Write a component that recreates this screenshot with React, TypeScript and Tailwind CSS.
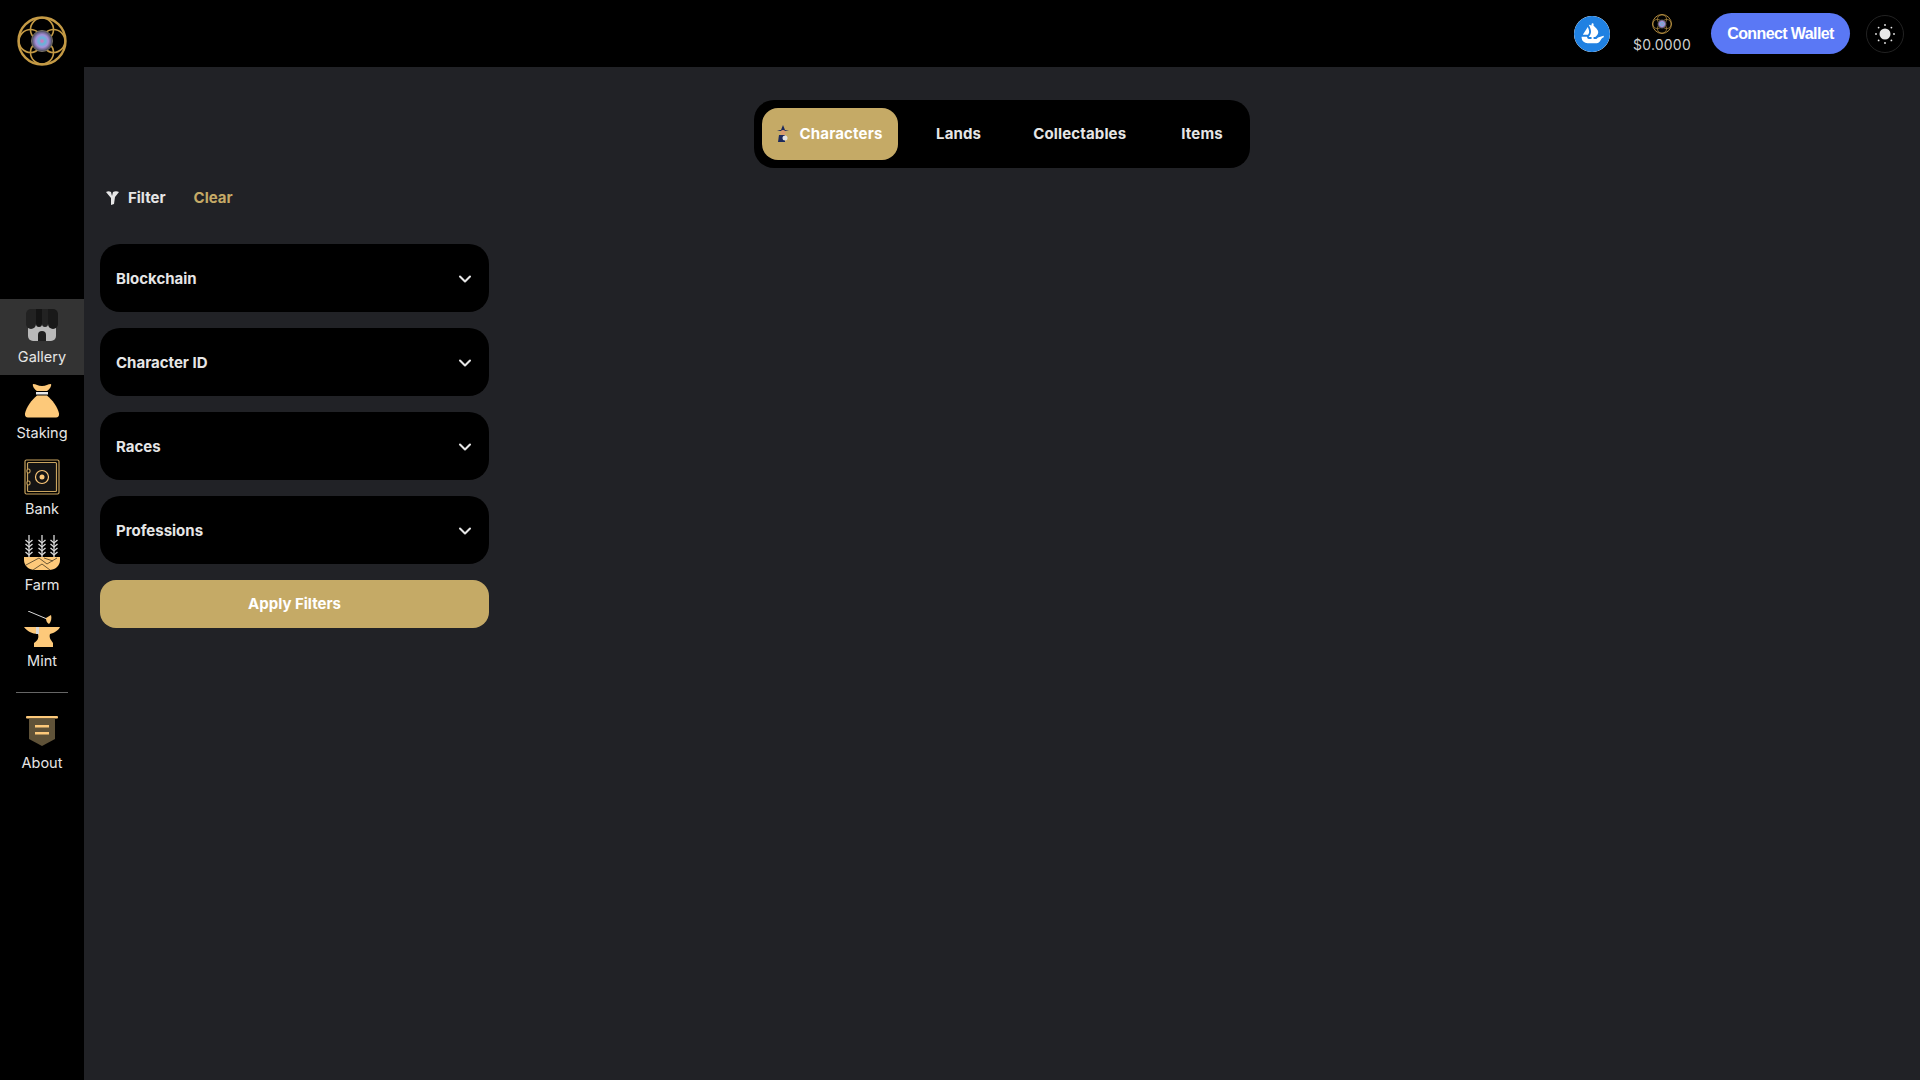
import React from 'react';
import { ChevronDown } from 'lucide-react';
import { SiOpensea } from 'react-icons/si';

const Logo: React.FC<{ size: number; className?: string }> = ({ size, className = '' }) => (
  <svg width={size} height={size} viewBox="0 0 50 50" className={className} fill="none">
    <defs>
      <radialGradient id={`orb${size}`} cx="50%" cy="50%" r="50%">
        <stop offset="0%" stopColor="#e86ab8" />
        <stop offset="30%" stopColor="#62b8d8" />
        <stop offset="60%" stopColor="#a58fd8" />
        <stop offset="85%" stopColor="#6a6488" />
        <stop offset="100%" stopColor="#3a3a40" />
      </radialGradient>
    </defs>
    <g stroke="#c49a45" strokeWidth="1.6">
      <circle cx="25" cy="25" r="23.5" strokeWidth="2.4" />
      <circle cx="25" cy="13.500" r="11.500" />
      <circle cx="25" cy="36.500" r="11.500" />
      <circle cx="13.500" cy="25" r="11.500" />
      <circle cx="36.500" cy="25" r="11.500" />
    </g>
    <circle cx="25" cy="25" r="10.500" fill={`url(#orb${size})`} stroke="#77736a" />
  </svg>
);

const GalleryIcon = () => (
  <svg width="32" height="32" viewBox="0 0 32 32">
    <path d="M2 15h28v12a5 5 0 0 1-5 5H7a5 5 0 0 1-5-5z" fill="#b9b9b9" />
    <path d="M12 32v-6a4 4 0 0 1 8 0v6z" fill="#1e1e1e" />
    <path d="M5 0h5v15a4 4 0 0 1-10 0V5a5 5 0 0 1 5-5z" fill="#222" />
    <path d="M10 0h6v15a3 3 0 0 1-6 0z" fill="#141414" />
    <path d="M16 0h6v15a3 3 0 0 1-6 0z" fill="#222" />
    <path d="M22 0h5a5 5 0 0 1 5 5v10a5 5 0 0 1-10 0z" fill="#191919" />
  </svg>
);

const StakingIcon = () => (
  <svg width="36" height="36" viewBox="0 0 36 36">
    <path d="M9 1c3 0 5 2 9 2s6-2 9-2c1 2-2 6-4 7H13C11 7 8 3 9 1z" fill="#fdc97a" />
    <rect x="12" y="9" width="12" height="2.500" fill="#e8e8e8" />
    <path d="M13 12.500h10c5 4 11 12 12 18 .4 2.500-1 4-3 4H4c-2 0-3.400-1.500-3-4 1-6 7-14 12-18z" fill="#fdc97a" />
  </svg>
);

const BankIcon = () => (
  <svg width="36" height="36" viewBox="0 0 36 36" fill="none" stroke="#c9a45f" strokeWidth="1.200">
    <rect x="1" y="1" width="34" height="34" rx="1.500" />
    <rect x="3.500" y="3.500" width="29" height="29" rx="1" fill="#141414" />
    <circle cx="18" cy="18" r="6.500" stroke="#fdc97a" />
    <circle cx="18" cy="18" r="2.500" fill="#fdc97a" stroke="none" />
    <rect x="3" y="10" width="3" height="4" rx="1.500" fill="#000" />
    <rect x="3" y="22" width="3" height="4" rx="1.500" fill="#000" />
  </svg>
);

const Wheat: React.FC<{ x: number }> = ({ x }) => (
  <g stroke="#d9d9d9" strokeWidth="1.300" fill="none">
    <path d={`M${x} 0v22`} />
    {[5, 9, 13, 17].map((y) => (
      <path key={y} d={`M${x - 3.500} ${y}l3.500 3 3.500-3`} />
    ))}
  </g>
);

const FarmIcon = () => (
  <svg width="36" height="36" viewBox="0 0 36 36">
    <Wheat x={5} />
    <Wheat x={18} />
    <Wheat x={30} />
    <path d="M0 22h36v3c0 6-5 10-11 10H11C5 35 0 31 0 25z" fill="#fdc97a" />
    <path d="M2 30l13-7 8 6 10-6M9 35l9-6 8 6M20 23l9 3" stroke="#5a4a2c" strokeWidth="0.900" fill="none" />
  </svg>
);

const MintIcon = () => (
  <svg width="36" height="36" viewBox="0 0 36 36">
    <path d="M4 0l19 8" stroke="#d9d9d9" strokeWidth="1" />
    <path d="M22 7l5-3c1 3 0 7-2 9-2-1-3-3-3-6z" fill="#fdc97a" />
    <path d="M0 16h36c-1 3-6 6-10 7-1 3 0 5 3 9v4H10v-4c4-3 5-5 4-9-6 0-11-3-14-7z" fill="#fdc97a" />
    <rect x="12" y="16" width="3" height="7" fill="#d9d9d9" />
  </svg>
);

const AboutIcon = () => (
  <svg width="32" height="30" viewBox="0 0 32 30">
    <rect x="0" y="0" width="32" height="2.500" rx="1" fill="#fdc97a" />
    <path d="M3 2.500h26V23l-13 7-13-7z" fill="#5f5238" />
    <rect x="9" y="9" width="14" height="2.500" fill="#fdc97a" />
    <rect x="9" y="16" width="14" height="2.500" fill="#fdc97a" />
  </svg>
);

const navItems = [
  { label: 'Gallery', icon: <GalleryIcon />, active: true },
  { label: 'Staking', icon: <StakingIcon /> },
  { label: 'Bank', icon: <BankIcon /> },
  { label: 'Farm', icon: <FarmIcon /> },
  { label: 'Mint', icon: <MintIcon /> },
];

const NavItem: React.FC<{ label: string; icon: React.ReactNode; active?: boolean }> = ({ label, icon, active }) => (
  <div className={`h-[76px] flex flex-col items-center pt-2 ${active ? 'bg-[#333333]' : ''}`}>
    <div className="h-9 flex items-center justify-center">{icon}</div>
    <span className="text-[14.5px] leading-5 mt-1 text-[#e6e6e6]">{label}</span>
  </div>
);

const filters = ['Blockchain', 'Character ID', 'Races', 'Professions'];

export default function App() {
  return (
    <div className="min-h-screen h-screen flex flex-col bg-[#212226] font-['Inter','Liberation_Sans',sans-serif] text-[#e6e6e6] overflow-hidden">
      <header className="h-[67px] shrink-0 bg-black flex items-center pl-[17px] pr-4">
        <Logo size={50} className="mt-[14px]" />
        <div className="ml-auto flex items-center">
          <div className="relative w-9 h-9 rounded-full bg-white flex items-center justify-center">
            <SiOpensea size={36} color="#2081e2" className="rounded-full" />
          </div>
          <div className="ml-[3px] w-[98px] pt-0.5 flex flex-col items-center">
            <Logo size={20} />
            <span className="text-[14px] leading-5 mt-px text-[#cfcfcf] tracking-[0.2px]">$0.0000</span>
          </div>
          <button className="h-[41px] w-[139px] rounded-full bg-[#5a78f5] text-white text-base font-semibold tracking-[-0.6px] font-['Liberation_Sans',sans-serif]">
            Connect Wallet
          </button>
          <div className="ml-4 w-[38px] h-[38px] rounded-full border border-[#222222] flex items-center justify-center">
            <svg width="20" height="20" viewBox="0 0 20 20" fill="#e8e8e8">
              <circle cx="10" cy="10" r="5.500" />
              {[[10, 1], [10, 19], [1, 10], [19, 10], [3.600, 3.600], [16.400, 3.600], [3.600, 16.400], [16.400, 16.400]].map(([x, y]) => (
                <circle key={`${x}-${y}`} cx={x} cy={y} r="0.900" />
              ))}
            </svg>
          </div>
        </div>
      </header>

      <div className="flex flex-1 min-h-0">
        <aside className="w-[84px] shrink-0 bg-black pt-[232px]">
          {navItems.map((item) => (
            <NavItem key={item.label} {...item} />
          ))}
          <div className="mx-4 mt-[13px] mb-[23px] border-t border-[#666666]" />
          <div className="flex flex-col items-center">
            <AboutIcon />
            <span className="text-[14.5px] leading-5 mt-[7px] text-[#e6e6e6]">About</span>
          </div>
        </aside>

        <main className="flex-1 min-w-0 relative pt-[33px] pl-4">
          <div className="flex justify-center pr-[14px]">
            <div className="relative left-[-1px] h-[68px] w-[496px] rounded-[20px] bg-black p-2 flex items-center text-[15px] font-bold tracking-[0.15px]">
              <div className="h-[52px] w-[136px] rounded-2xl bg-[#c5aa66] flex items-center justify-center gap-[10px] pr-0.5 text-white">
                <svg width="14" height="18" viewBox="0 0 14 18">
                  <path d="M7 0l2 5h4l-4 1H4L1 5h4z" fill="#1d2a5c" />
                  <circle cx="7" cy="7.500" r="2.500" fill="#d99a70" />
                  <path d="M3 10h6v7H2z" fill="#1d2a5c" />
                  <circle cx="9" cy="13" r="2.500" fill="#e3e3e3" />
                </svg>
                Characters
              </div>
              <span className="ml-[38px]">Lands</span>
              <span className="ml-[52px]">Collectables</span>
              <span className="ml-[55px]">Items</span>
            </div>
          </div>

          <div className="mt-5 h-5 pl-[6px] flex items-center text-[15px] font-bold">
            <svg width="13" height="14" viewBox="0 0 13 14" fill="#e6e6e6">
              <path d="M0 1c2-1 3-1 5 0l1 4 1-4c2-1 4-1 6 0L9 6 8 13l-3 1V7z" />
            </svg>
            <span className="ml-[9px]">Filter</span>
            <span className="ml-7 text-[#c5aa66]">Clear</span>
          </div>

          <div className="mt-9 w-[389px] flex flex-col gap-4">
            {filters.map((name) => (
              <div key={name} className="h-[68px] rounded-[20px] bg-black flex items-center justify-between pt-0.5 pl-4 pr-[14px] text-[15px] font-bold">
                {name}
                <ChevronDown size={20} strokeWidth={2.5} />
              </div>
            ))}
            <button className="h-12 rounded-2xl bg-[#c5aa66] pt-px text-white text-[15px] font-bold">
              Apply Filters
            </button>
          </div>
        </main>
      </div>
    </div>
  );
}
